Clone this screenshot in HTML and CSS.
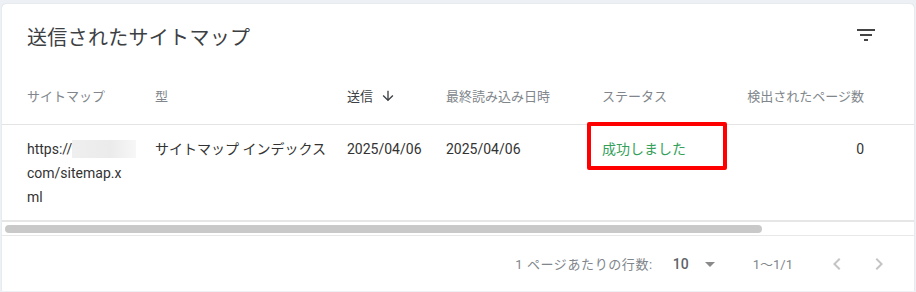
FILE: index.html
```html
<!DOCTYPE html>
<html>
<head>
<title>送信されたサイトマップ</title>
<link rel="stylesheet" href="styles.css">
</head>
<body>
<div class="card">
  <div class="card-header">
    <div class="card-title">送信されたサイトマップ</div>
    <button class="icon-button" aria-label="フィルタ">
      <svg viewBox="0 0 24 24" width="24" height="24"><path d="M10 18h4v-2h-4v2zM3 6v2h18V6H3zm3 7h12v-2H6v2z"/></svg>
    </button>
  </div>
  <div class="table">
    <div class="table-row head-row">
      <div class="cell">サイトマップ</div>
      <div class="cell">型</div>
      <div class="cell sorted">送信
        <svg class="sort-arrow" viewBox="0 0 24 24" width="16" height="16"><path d="M20 12l-1.41-1.41L13 16.17V4h-2v12.17l-5.58-5.59L4 12l8 8 8-8z"/></svg>
      </div>
      <div class="cell">最終読み込み日時</div>
      <div class="cell">ステータス</div>
      <div class="cell num">検出されたページ数</div>
    </div>
    <div class="table-row body-row">
      <div class="cell url">https://<span class="redact"></span>com/sitemap.xml</div>
      <div class="cell">サイトマップ インデックス</div>
      <div class="cell">2025/04/06</div>
      <div class="cell">2025/04/06</div>
      <div class="cell status">
        <span class="success">成功しました</span>
        <div class="highlight"></div>
      </div>
      <div class="cell num">0</div>
    </div>
  </div>
  <div class="scrollbar">
    <div class="scroll-thumb"></div>
  </div>
  <div class="pager">
    <span class="pager-label">1 ページあたりの行数:</span>
    <span class="page-size">10</span>
    <svg class="drop" viewBox="0 0 24 24" width="24" height="24"><path d="M7 10l5 5 5-5z"/></svg>
    <span class="range">1〜1/1</span>
    <svg class="nav" viewBox="0 0 24 24" width="24" height="24"><path d="M15.41 7.41L14 6l-6 6 6 6 1.41-1.41L10.83 12z"/></svg>
    <svg class="nav next" viewBox="0 0 24 24" width="24" height="24"><path d="M10 6L8.59 7.41 13.17 12l-4.58 4.59L10 18l6-6z"/></svg>
  </div>
</div>
</body>
</html>
```

FILE: styles.css
```css
body {
  margin: 0;
  font-family: Roboto, "Noto Sans CJK JP", sans-serif;
  background-color: #edf0f4;
  overflow: hidden;
}
.card {
  margin: 4px 2px 0 2px;
  height: 287px;
  background-color: white;
  border-radius: 4px 4px 0 0;
  box-shadow: 0 0 1px rgba(60,64,67,0.3);
  overflow: hidden;
}
.card-header {
  display: flex;
  align-items: center;
  justify-content: space-between;
  height: 63px;
  padding: 0 36px 0 25px;
}
.card-title {
  font-size: 20px;
  letter-spacing: 0.3px;
  color: #3c4043;
  padding-top: 1px;
}
.icon-button {
  border: none;
  background: none;
  padding: 0;
  width: 24px;
  height: 24px;
  margin-top: -1px;
  fill: #444;
}
.table-row {
  display: grid;
  grid-template-columns: 128px 192px 99px 156px 144px 118px;
  padding-left: 25px;
}
.head-row {
  height: 57px;
  align-items: center;
  font-size: 13px;
  color: #80868b;
  border-bottom: 1px solid #e4e4e4;
}
.body-row {
  padding-top: 12px;
  padding-bottom: 11px;
  font-size: 14px;
  line-height: 24px;
  color: #333;
  border-bottom: 2px solid #e6e6e6;
}
.cell {
  padding-right: 20px;
}
.cell.num {
  padding-right: 0;
  text-align: right;
}
.sorted {
  display: flex;
  align-items: center;
  color: #3c4043;
}
.sort-arrow {
  margin-left: 7px;
  fill: #3c4043;
}
.url {
  padding-right: 24px;
  word-break: break-all;
}
.redact {
  display: inline-block;
  width: 64px;
  height: 18px;
  margin-right: -12px;
  vertical-align: -4px;
  background: linear-gradient(to right, #efefef, #ebebeb 60%, #f7f7f7);
}
.status {
  position: relative;
}
.success {
  color: #34a05a;
}
.highlight {
  position: absolute;
  left: -15px;
  top: -15px;
  width: 140px;
  height: 48px;
  box-sizing: border-box;
  border: 4px solid #ff0000;
  border-radius: 2px;
}
.scrollbar {
  height: 13px;
  padding-left: 3px;
  border-bottom: 1px solid #e8e8e8;
  display: flex;
  align-items: center;
}
.scroll-thumb {
  width: 757px;
  height: 8px;
  border-radius: 4px;
  background-color: #c9c9c9;
}
.pager {
  display: flex;
  align-items: center;
  justify-content: flex-end;
  height: 55px;
  padding-right: 23px;
  font-size: 13px;
  color: #80868b;
}
.pager-label {
  letter-spacing: 0.6px;
}
.page-size {
  margin-left: 20px;
  font-size: 14px;
  font-weight: 500;
  color: #5f6368;
}
.drop {
  margin-left: 9px;
  fill: #8a8a8a;
}
.range {
  margin-left: 31px;
  font-size: 13px;
}
.nav {
  margin-left: 32px;
  fill: #c4c4c4;
}
.nav.next {
  margin-left: 18px;
}
```
